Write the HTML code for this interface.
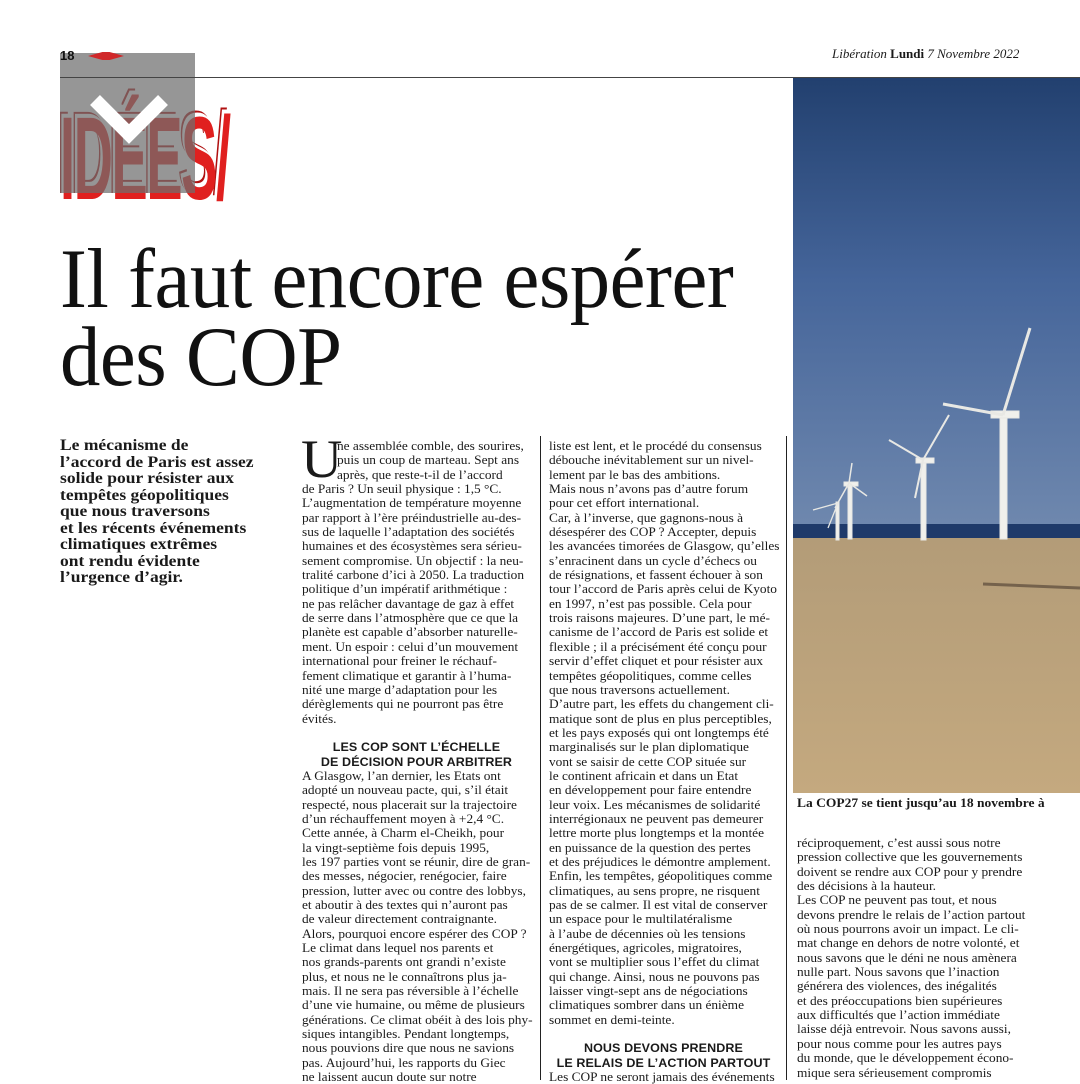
<!DOCTYPE html>
<html><head><meta charset="utf-8"><style>
*{margin:0;padding:0;box-sizing:border-box}
body{width:1080px;height:1080px;background:#fff;position:relative;overflow:hidden;font-family:"Liberation Serif",serif;color:#1a1a1a}
.abs{position:absolute}
.col{position:absolute;font-size:12.6px;line-height:14.35px;white-space:nowrap;width:216px;transform:scaleX(1.06);transform-origin:left top}
.col div{height:14.35px}
.h{font-family:"Liberation Sans",sans-serif;font-weight:bold;text-align:center;font-size:11.8px;letter-spacing:.1px}
</style></head><body>
<div class="abs" style="left:60px;top:100px;font:bold 118px/118px 'Liberation Sans',sans-serif;color:#e0201f;transform:scaleX(.46);transform-origin:left top;letter-spacing:-3px;text-shadow:-5px -4px 0 #fff,-8px -6px 0 #b01010">IDÉES/</div>
<div class="abs" style="left:60px;top:53px;width:135px;height:140px;background:rgba(110,110,110,.72)"></div>
<svg class="abs" style="left:85px;top:90px" width="90" height="60"><polyline points="10,10 44,44 78,10" fill="none" stroke="#fff" stroke-width="14"/></svg>
<div class="abs" style="left:60px;top:48px;font:bold 13px 'Liberation Sans',sans-serif;color:#111">18</div>
<div class="abs" style="left:88px;top:52px;width:36px;height:8px;background:#d0282a;clip-path:polygon(0 50%,40% 0,60% 0,100% 50%,60% 100%,40% 100%)"></div>
<div class="abs" style="left:832px;top:46px;font-size:13px;font-style:italic">Libération <b style="font-style:normal">Lundi</b> 7 Novembre 2022</div>
<div class="abs" style="left:60px;top:77px;width:1020px;height:1px;background:#444"></div>
<div class="abs" style="left:60px;top:240px;font-size:85px;line-height:78px;letter-spacing:-0.5px;color:#111;white-space:nowrap;transform:scaleX(.95);transform-origin:left top">Il faut encore espérer<br>des COP</div>
<div class="abs" style="left:60px;top:438px;font-size:15.5px;line-height:16.5px;font-weight:bold;white-space:nowrap;transform:scaleX(1.13);transform-origin:left top">Le mécanisme de<br>l’accord de Paris est assez<br>solide pour résister aux<br>tempêtes géopolitiques<br>que nous traversons<br>et les récents événements<br>climatiques extrêmes<br>ont rendu évidente<br>l’urgence d’agir.</div>
<div class="col" style="left:302px;top:439px">
<div style="position:absolute;left:-1px;top:-5px;font-size:54px;line-height:50px;height:auto">U</div>
<div style="padding-left:33px">ne assemblée comble, des sourires,</div><div style="padding-left:33px">puis un coup de marteau. Sept ans</div><div style="padding-left:33px">après, que reste-t-il de l’accord</div>
<div>de Paris ? Un seuil physique : 1,5 °C.</div><div>L’augmentation de température moyenne</div><div>par rapport à l’ère préindustrielle au-des-</div><div>sus de laquelle l’adaptation des sociétés</div><div>humaines et des écosystèmes sera sérieu-</div><div>sement compromise. Un objectif : la neu-</div><div>tralité carbone d’ici à 2050. La traduction</div><div>politique d’un impératif arithmétique :</div><div>ne pas relâcher davantage de gaz à effet</div><div>de serre dans l’atmosphère que ce que la</div><div>planète est capable d’absorber naturelle-</div><div>ment. Un espoir : celui d’un mouvement</div><div>international pour freiner le réchauf-</div><div>fement climatique et garantir à l’huma-</div><div>nité une marge d’adaptation pour les</div><div>dérèglements qui ne pourront pas être</div><div>évités.</div>
<div></div><div class="h">LES COP SONT L’ÉCHELLE</div><div class="h">DE DÉCISION POUR ARBITRER</div>
<div>A Glasgow, l’an dernier, les Etats ont</div><div>adopté un nouveau pacte, qui, s’il était</div><div>respecté, nous placerait sur la trajectoire</div><div>d’un réchauffement moyen à +2,4 °C.</div><div>Cette année, à Charm el-Cheikh, pour</div><div>la vingt-septième fois depuis 1995,</div><div>les 197 parties vont se réunir, dire de gran-</div><div>des messes, négocier, renégocier, faire</div><div>pression, lutter avec ou contre des lobbys,</div><div>et aboutir à des textes qui n’auront pas</div><div>de valeur directement contraignante.</div><div>Alors, pourquoi encore espérer des COP ?</div><div>Le climat dans lequel nos parents et</div><div>nos grands-parents ont grandi n’existe</div><div>plus, et nous ne le connaîtrons plus ja-</div><div>mais. Il ne sera pas réversible à l’échelle</div><div>d’une vie humaine, ou même de plusieurs</div><div>générations. Ce climat obéit à des lois phy-</div><div>siques intangibles. Pendant longtemps,</div><div>nous pouvions dire que nous ne savions</div><div>pas. Aujourd’hui, les rapports du Giec</div><div>ne laissent aucun doute sur notre</div>
</div>
<div class="abs" style="left:540px;top:436px;width:1px;height:644px;background:#222"></div>
<div class="col" style="left:549px;top:439px">
<div>liste est lent, et le procédé du consensus</div><div>débouche inévitablement sur un nivel-</div><div>lement par le bas des ambitions.</div><div>Mais nous n’avons pas d’autre forum</div><div>pour cet effort international.</div><div>Car, à l’inverse, que gagnons-nous à</div><div>désespérer des COP ? Accepter, depuis</div><div>les avancées timorées de Glasgow, qu’elles</div><div>s’enracinent dans un cycle d’échecs ou</div><div>de résignations, et fassent échouer à son</div><div>tour l’accord de Paris après celui de Kyoto</div><div>en 1997, n’est pas possible. Cela pour</div><div>trois raisons majeures. D’une part, le mé-</div><div>canisme de l’accord de Paris est solide et</div><div>flexible ; il a précisément été conçu pour</div><div>servir d’effet cliquet et pour résister aux</div><div>tempêtes géopolitiques, comme celles</div><div>que nous traversons actuellement.</div><div>D’autre part, les effets du changement cli-</div><div>matique sont de plus en plus perceptibles,</div><div>et les pays exposés qui ont longtemps été</div><div>marginalisés sur le plan diplomatique</div><div>vont se saisir de cette COP située sur</div><div>le continent africain et dans un Etat</div><div>en développement pour faire entendre</div><div>leur voix. Les mécanismes de solidarité</div><div>interrégionaux ne peuvent pas demeurer</div><div>lettre morte plus longtemps et la montée</div><div>en puissance de la question des pertes</div><div>et des préjudices le démontre amplement.</div><div>Enfin, les tempêtes, géopolitiques comme</div><div>climatiques, au sens propre, ne risquent</div><div>pas de se calmer. Il est vital de conserver</div><div>un espace pour le multilatéralisme</div><div>à l’aube de décennies où les tensions</div><div>énergétiques, agricoles, migratoires,</div><div>vont se multiplier sous l’effet du climat</div><div>qui change. Ainsi, nous ne pouvons pas</div><div>laisser vingt-sept ans de négociations</div><div>climatiques sombrer dans un énième</div><div>sommet en demi-teinte.</div>
<div></div><div class="h">NOUS DEVONS PRENDRE</div><div class="h">LE RELAIS DE L’ACTION PARTOUT</div>
<div>Les COP ne seront jamais des événements</div>
</div>
<div class="abs" style="left:786px;top:436px;width:1px;height:644px;background:#222"></div>
<svg class="abs" style="left:793px;top:78px" width="287" height="715">
<defs><linearGradient id="s" x1="0" y1="0" x2="0" y2="1"><stop offset="0" stop-color="#22406f"/><stop offset=".45" stop-color="#45659a"/><stop offset="1" stop-color="#6f88ae"/></linearGradient>
<linearGradient id="d" x1="0" y1="0" x2="0" y2="1"><stop offset="0" stop-color="#b39c78"/><stop offset="1" stop-color="#c4a97f"/></linearGradient></defs>
<rect width="287" height="450" fill="url(#s)"/>
<rect y="446" width="287" height="16" fill="#1f3a6a"/>
<rect y="460" width="287" height="255" fill="url(#d)"/>
<path d="M190 506 L287 510" stroke="#5a4a3a" stroke-width="3" opacity=".7"/>
<g fill="#f0f0ec" stroke="#e8e8e4">
<rect x="207" y="337" width="7" height="124"/><rect x="198" y="333" width="28" height="7"/>
<path d="M210 337 L237 250 M210 337 L150 326" stroke-width="3"/>
<rect x="128" y="383" width="5" height="79"/><rect x="123" y="380" width="18" height="5"/>
<path d="M130 382 L156 337 M130 382 L96 362 M130 382 L122 420" stroke-width="2"/>
<rect x="55" y="405" width="4" height="56"/><rect x="51" y="404" width="14" height="4"/>
<path d="M56 405 L59 385 M56 405 L74 418 M56 405 L42 430" stroke-width="1.5"/>
<rect x="43" y="424" width="3" height="38"/><path d="M45 425 L20 432 M45 425 L35 450" stroke-width="1.3"/>
</g></svg>
<div class="abs" style="left:797px;top:796px;font-size:12.5px;font-weight:bold;white-space:nowrap;transform:scaleX(1.08);transform-origin:left top">La COP27 se tient jusqu’au 18 novembre à</div>
<div class="col" style="left:797px;top:836px">
<div>réciproquement, c’est aussi sous notre</div><div>pression collective que les gouvernements</div><div>doivent se rendre aux COP pour y prendre</div><div>des décisions à la hauteur.</div><div>Les COP ne peuvent pas tout, et nous</div><div>devons prendre le relais de l’action partout</div><div>où nous pourrons avoir un impact. Le cli-</div><div>mat change en dehors de notre volonté, et</div><div>nous savons que le déni ne nous amènera</div><div>nulle part. Nous savons que l’inaction</div><div>générera des violences, des inégalités</div><div>et des préoccupations bien supérieures</div><div>aux difficultés que l’action immédiate</div><div>laisse déjà entrevoir. Nous savons aussi,</div><div>pour nous comme pour les autres pays</div><div>du monde, que le développement écono-</div><div>mique sera sérieusement compromis</div>
</div>
</body></html>
